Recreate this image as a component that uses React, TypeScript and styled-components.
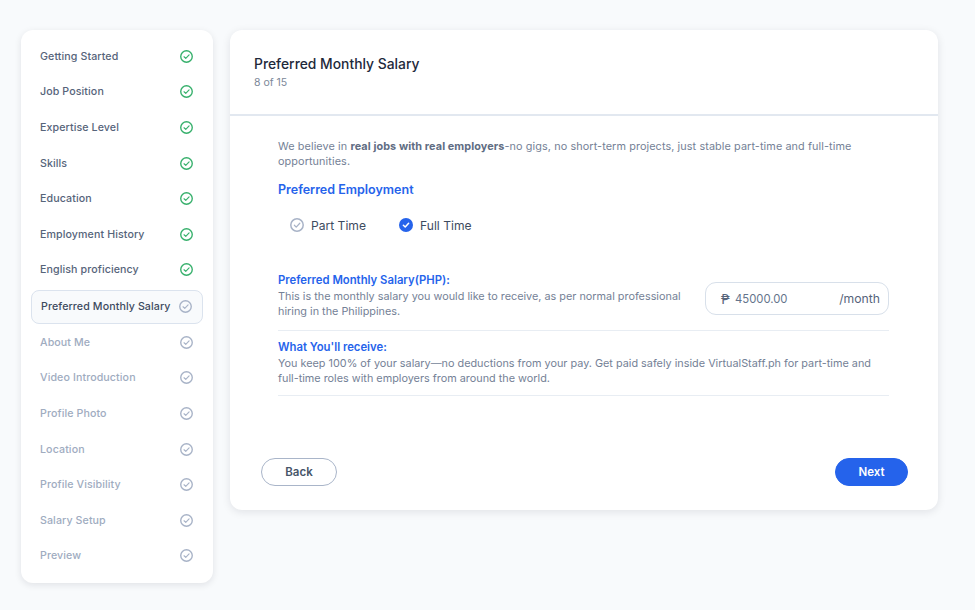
import React from "react";
import styled, { createGlobalStyle } from "styled-components";

const Global = createGlobalStyle`
  html, body { margin: 0; padding: 0; background: #f8fafc; }
  body { font-family: "Inter", "Liberation Sans", sans-serif; color: #1e293b; }
  * { box-sizing: border-box; }
`;

const Page = styled.div`
  width: 975px;
  height: 610px;
  padding: 30px 37px 0 21px;
  display: flex;
  align-items: flex-start;
  gap: 17px;
  overflow: hidden;
`;

const Sidebar = styled.nav`
  width: 192px;
  height: 553px;
  flex: none;
  padding: 8.5px 10px;
  background: #fff;
  border-radius: 12px;
  box-shadow: 0 2px 7px rgba(15, 23, 42, 0.1);
`;

const StepItem = styled.div<{ $active?: boolean }>`
  display: flex;
  align-items: center;
  justify-content: space-between;
  height: ${(p) => (p.$active ? "34px" : "35.6px")};
  margin: ${(p) => (p.$active ? "2.1px 0 0.7px" : "0")};
  padding: 0 10.5px 0 9px;
  border: ${(p) => (p.$active ? "1px solid #dbe3ee" : "0")};
  border-radius: 8px;
  background: ${(p) => (p.$active ? "#f8fafc" : "transparent")};
`;

const StepLabel = styled.span<{ $state: "done" | "active" | "todo" }>`
  font-size: 10.65px;
  font-weight: 500;
  letter-spacing: 0.1px;
  white-space: nowrap;
  color: ${(p) => (p.$state === "done" ? "#56647a" : p.$state === "active" ? "#3d4b60" : "#a0acbf")};
`;

const Card = styled.main`
  width: 708px;
  height: 480px;
  flex: none;
  display: flex;
  flex-direction: column;
  background: #fff;
  border-radius: 12px;
  box-shadow: 0 2px 8px rgba(15, 23, 42, 0.1);
`;

const CardHeader = styled.header`
  height: 86px;
  flex: none;
  padding: 25px 24px 0;
  border-bottom: 2px solid #e2e8f0;
`;

const Title = styled.h1`
  margin: 0;
  font-size: 13.85px;
  line-height: 18px;
  font-weight: 500;
  color: #1e293b;
`;

const Counter = styled.div`
  margin-top: 3px;
  font-size: 10.5px;
  line-height: 14px;
  color: #7b8798;
`;

const CardBody = styled.section`
  padding: 23px 49px 0 48px;
  flex: 1;
`;

const Text = styled.p<{ $wide?: boolean }>`
  margin: 0;
  font-size: 10.85px;
  line-height: 15px;
  letter-spacing: ${(p) => (p.$wide ? "0.09px" : "0")};
  color: #748196;
  b { font-weight: 700; color: #5f6d83; }
`;

const SectionTitle = styled.h2`
  margin: 13px 0 0;
  font-size: 12.5px;
  line-height: 16px;
  font-weight: 600;
  color: #2563eb;
`;

const RadioRow = styled.div`
  display: flex;
  align-items: center;
  gap: 33px;
  margin-top: 18px;
  padding-left: 12px;
  height: 18px;
`;

const Radio = styled.label`
  display: flex;
  align-items: center;
  gap: 7px;
  font-size: 12.1px;
  color: #3d4b60;
`;

const SalaryRow = styled.div`
  display: flex;
  align-items: flex-start;
  justify-content: space-between;
  margin-top: 39px;
  padding-bottom: 11px;
  border-bottom: 1px solid #e8edf3;
`;

const SalaryInfo = styled.div`
  width: 410px;
`;

const InfoTitle = styled.h3`
  margin: 0 0 1px;
  font-size: 11.3px;
  line-height: 15px;
  font-weight: 600;
  color: #2563eb;
`;

const AmountBox = styled.div`
  width: 184px;
  height: 33px;
  margin-top: 9px;
  display: flex;
  align-items: center;
  padding: 0 8px 0 15px;
  border: 1px solid #d8e0ea;
  border-radius: 11px;
  font-size: 11.3px;
  color: #64748b;
`;

const Peso = styled.span`
  width: 14px;
  font-family: "Noto Sans", "DejaVu Sans", sans-serif;
  font-size: 15px;
  line-height: 1;
  color: #56647a;
`;

const Amount = styled.span`
  flex: 1;
`;

const Unit = styled.span`
  font-size: 12.2px;
  color: #56647a;
`;

const InfoBlock = styled.div`
  padding: 9px 0 9px;
  border-bottom: 1px solid #e8edf3;
`;

const Actions = styled.footer`
  display: flex;
  justify-content: space-between;
  padding: 0 30px 0 31px;
  margin-bottom: 24px;
`;

const Button = styled.button<{ $primary?: boolean }>`
  height: 28px;
  padding: 0;
  width: ${(p) => (p.$primary ? "73px" : "76px")};
  border-radius: 14px;
  border: 1px solid ${(p) => (p.$primary ? "#2563eb" : "#a9b5c9")};
  background: ${(p) => (p.$primary ? "#2563eb" : "#fff")};
  color: ${(p) => (p.$primary ? "#fff" : "#475569")};
  font-family: inherit;
  font-size: 11.5px;
  font-weight: 600;
`;

function CheckIcon({ color, size = 13 }: { color: string; size?: number }) {
  return (
    <svg width={size} height={size} viewBox="0 0 16 16" fill="none" style={{ flex: "none" }}>
      <circle cx="8" cy="8" r="7.1" stroke={color} strokeWidth="1.7" />
      <path d="M5 8.3l2.1 2.1L11.2 6" stroke={color} strokeWidth="1.4" strokeLinecap="round" strokeLinejoin="round" />
    </svg>
  );
}

function FilledCheck() {
  return (
    <svg width="14" height="14" viewBox="0 0 16 16" style={{ flex: "none" }}>
      <circle cx="8" cy="8" r="8" fill="#2563eb" />
      <path d="M5 8.3l2.1 2L11 6" stroke="#fff" strokeWidth="1.7" fill="none" strokeLinecap="round" strokeLinejoin="round" />
    </svg>
  );
}

const steps: [string, "done" | "active" | "todo"][] = [
  ["Getting Started", "done"],
  ["Job Position", "done"],
  ["Expertise Level", "done"],
  ["Skills", "done"],
  ["Education", "done"],
  ["Employment History", "done"],
  ["English proficiency", "done"],
  ["Preferred Monthly Salary", "active"],
  ["About Me", "todo"],
  ["Video Introduction", "todo"],
  ["Profile Photo", "todo"],
  ["Location", "todo"],
  ["Profile Visibility", "todo"],
  ["Salary Setup", "todo"],
  ["Preview", "todo"],
];

export default function App() {
  return (
    <Page>
      <Global />
      <Sidebar>
        {steps.map(([label, state]) => (
          <StepItem key={label} $active={state === "active"}>
            <StepLabel $state={state}>{label}</StepLabel>
            <CheckIcon color={state === "done" ? "#37b06c" : "#a8b3c7"} />
          </StepItem>
        ))}
      </Sidebar>
      <Card>
        <CardHeader>
          <Title>Preferred Monthly Salary</Title>
          <Counter>8 of 15</Counter>
        </CardHeader>
        <CardBody>
          <Text $wide>
            We believe in <b>real jobs with real employers</b>-no gigs, no short-term projects, just stable part-time and full-time opportunities.
          </Text>
          <SectionTitle>Preferred Employment</SectionTitle>
          <RadioRow>
            <Radio>
              <CheckIcon color="#a8b3c7" size={14} />
              Part Time
            </Radio>
            <Radio>
              <FilledCheck />
              Full Time
            </Radio>
          </RadioRow>
          <SalaryRow>
            <SalaryInfo>
              <InfoTitle>Preferred Monthly Salary(PHP):</InfoTitle>
              <Text>This is the monthly salary you would like to receive, as per normal professional hiring in the Philippines.</Text>
            </SalaryInfo>
            <AmountBox>
              <Peso>₱</Peso>
              <Amount>45000.00</Amount>
              <Unit>/month</Unit>
            </AmountBox>
          </SalaryRow>
          <InfoBlock>
            <InfoTitle>What You'll receive:</InfoTitle>
            <Text>You keep 100% of your salary—no deductions from your pay. Get paid safely inside VirtualStaff.ph for part-time and full-time roles with employers from around the world.</Text>
          </InfoBlock>
        </CardBody>
        <Actions>
          <Button>Back</Button>
          <Button $primary>Next</Button>
        </Actions>
      </Card>
    </Page>
  );
}
